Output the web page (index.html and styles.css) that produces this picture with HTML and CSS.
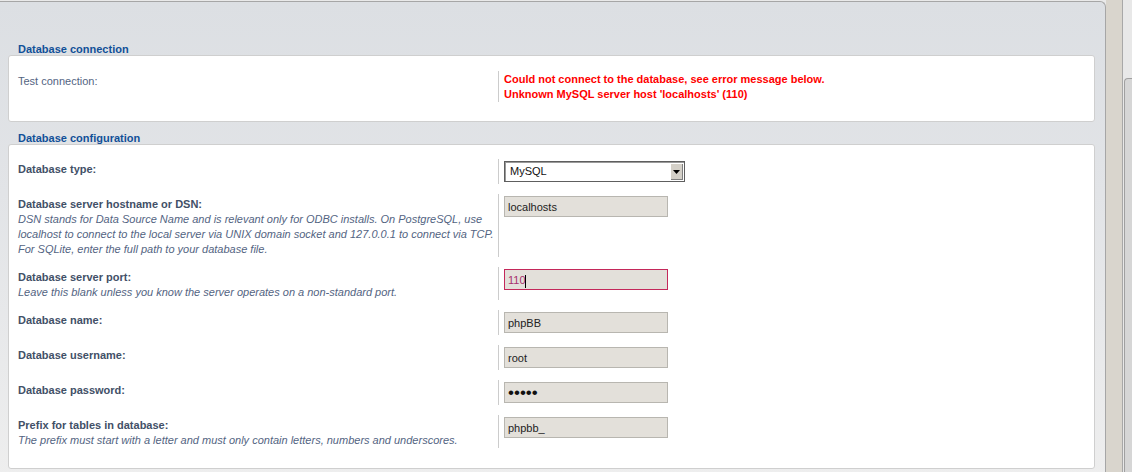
FILE: index.html
```html
<!DOCTYPE html>
<html lang="en">
<head>
    <meta charset="UTF-8">
    <title>Database settings</title>
    <link rel="stylesheet" href="styles.css">
</head>
<body>
    <div class="page">
        <div class="panel">
            <h3 class="legend">Database connection</h3>
            <div class="fieldset">
                <dl class="fields">
                    <dt class="plain">Test connection:</dt>
                    <dd class="error">Could not connect to the database, see error message below.<br>Unknown MySQL server host 'localhosts' (110)</dd>
                </dl>
            </div>

            <h3 class="legend">Database configuration</h3>
            <div class="fieldset config">
                <dl class="fields">
                    <dt><label>Database type:</label></dt>
                    <dd>
                        <div class="select">
                            <span class="select-value">MySQL</span>
                            <span class="select-arrow">
                                <svg width="7" height="4" viewBox="0 0 7 4"><path d="M0 0H7L3.5 4Z" fill="#000"/></svg>
                            </span>
                        </div>
                    </dd>

                    <dt>
                        <label>Database server hostname or DSN:</label>
                        <span class="explain">DSN stands for Data Source Name and is relevant only for ODBC installs. On PostgreSQL, use localhost to connect to the local server via UNIX domain socket and 127.0.0.1 to connect via TCP. For SQLite, enter the full path to your database file.</span>
                    </dt>
                    <dd><input type="text" class="inputbox" value="localhosts"></dd>

                    <dt>
                        <label>Database server port:</label>
                        <span class="explain">Leave this blank unless you know the server operates on a non-standard port.</span>
                    </dt>
                    <dd>
                        <div class="focused">
                            <input type="text" class="inputbox active" value="110">
                        </div>
                    </dd>

                    <dt><label>Database name:</label></dt>
                    <dd><input type="text" class="inputbox" value="phpBB"></dd>

                    <dt><label>Database username:</label></dt>
                    <dd><input type="text" class="inputbox" value="root"></dd>

                    <dt><label>Database password:</label></dt>
                    <dd><input type="password" class="inputbox password" value="12345"></dd>

                    <dt>
                        <label>Prefix for tables in database:</label>
                        <span class="explain">The prefix must start with a letter and must only contain letters, numbers and underscores.</span>
                    </dt>
                    <dd><input type="text" class="inputbox" value="phpbb_"></dd>
                </dl>
            </div>
        </div>

        <div class="scrollbar">
            <div class="scroll-gutter"></div>
            <div class="scroll-track">
                <div class="scroll-thumb"></div>
            </div>
        </div>
    </div>
</body>
</html>
```

FILE: styles.css
```css
html, body {
    margin: 0;
    padding: 0;
    height: 472px;
    overflow: hidden;
}
body {
    font-family: "Liberation Sans", Arial, sans-serif;
    font-size: 11px;
    background-color: #e9e9e9;
}
.page {
    display: flex;
    height: 472px;
}
.panel {
    width: 1106px;
    box-sizing: border-box;
    margin-top: 1px;
    height: 480px;
    padding: 0 10px 0 8px;
    border-top: 1px solid #a6a6a6;
    border-right: 1px solid #a6a6a6;
    border-top-right-radius: 6px;
    background: linear-gradient(#dcdfe3, #e2e4e7 40%, #eeeeee);
}
.legend {
    margin: 10px 0 0 0;
    padding-left: 10px;
    font-size: 11px;
    line-height: 12px;
    font-weight: bold;
    color: #115098;
}
.legend:first-child {
    margin-top: 41px;
}
.fieldset {
    background-color: #fff;
    border: 1px solid #cfcfcf;
    border-radius: 3px;
    padding: 15px 9px 19px 9px;
}
.fieldset.config {
    padding-top: 14px;
    padding-bottom: 20px;
}
.fields {
    display: grid;
    grid-template-columns: 480px 1fr;
    row-gap: 10px;
    margin: 0;
}
.fields dt {
    padding-top: 3px;
    line-height: 15px;
    color: #425067;
}
.fields dt label {
    font-weight: bold;
}
.fields dt.plain {
    color: #536482;
}
.explain {
    display: block;
    font-style: italic;
    color: #536482;
}
.fields dd {
    margin: 0;
    border-left: 1px solid #cccccc;
    padding-left: 5px;
    min-height: 25px;
}
.error {
    color: #ff0000;
    font-weight: bold;
    line-height: 15px;
    padding-top: 1px;
}
.inputbox {
    display: block;
    box-sizing: border-box;
    width: 164px;
    height: 21px;
    margin: 2px 0;
    padding: 0 3px;
    border: 1px solid #b8b6b0;
    background-color: #e3e0da;
    font-family: "Liberation Sans", Arial, sans-serif;
    font-size: 11px;
    color: #222;
    outline: none;
}
.inputbox.active {
    border: 1px solid #c4285a;
    color: #a8306e;
}
.inputbox.password {
    font-size: 17px;
    color: #111;
}
.focused {
    position: relative;
    width: 164px;
}
.focused::after {
    content: "";
    position: absolute;
    left: 21px;
    top: 6px;
    width: 1px;
    height: 13px;
    background-color: #000;
}
.select {
    display: flex;
    box-sizing: border-box;
    width: 181px;
    height: 21px;
    margin: 2px 0;
    border: 1px solid #5e5e5e;
    box-shadow: inset 1px 1px 0 #9a9a9a;
    background-color: #fff;
}
.select-value {
    flex: 1;
    padding: 3px 0 0 5px;
    color: #111;
}
.select-arrow {
    width: 13px;
    display: flex;
    align-items: center;
    justify-content: center;
    background-color: #d4d0c8;
    box-shadow: inset 1px 1px 0 #ffffff, inset -1px -1px 0 #808080;
    margin: 1px 1px 1px 0;
}
.scrollbar {
    display: flex;
    flex: 1;
    height: 472px;
}
.scroll-gutter {
    width: 16px;
    background-color: #d9d5cd;
}
.scroll-track {
    flex: 1;
    border-left: 1px solid #a8a8a8;
    background-color: #e8e8e8;
    padding-top: 78px;
    padding-left: 1px;
}
.scroll-thumb {
    height: 400px;
    border: 1px solid #a0a0a0;
    border-right: none;
    border-top-left-radius: 4px;
    background-color: #d6d6d6;
}
```
